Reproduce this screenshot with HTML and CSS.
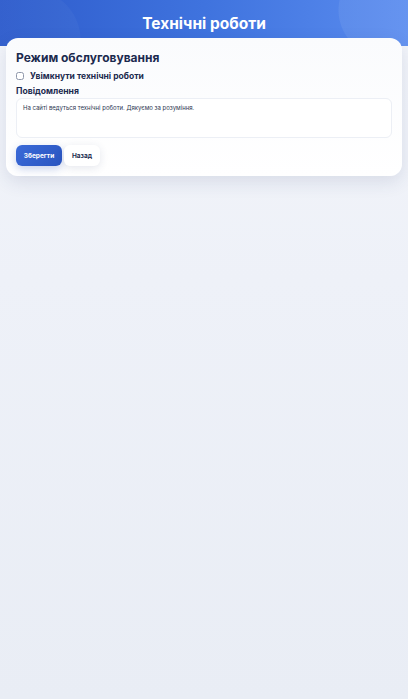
FILE: index.html
```html
<!DOCTYPE html>
<html lang="uk">
<head>
<meta charset="utf-8">
<title>Технічні роботи</title>
<link rel="stylesheet" href="styles.css">
</head>
<body>
<header class="hero">
  <h1 class="hero-title">Технічні роботи</h1>
</header>
<main class="page">
  <section class="card">
    <h2 class="card-title">Режим обслуговування</h2>
    <label class="check-row">
      <input type="checkbox" class="check">
      <span class="check-label">Увімкнути технічні роботи</span>
    </label>
    <div class="field-label">Повідомлення</div>
    <textarea class="message">На сайті ведуться технічні роботи. Дякуємо за розуміння.</textarea>
    <div class="actions">
      <button class="btn btn-primary">Зберегти</button>
      <button class="btn btn-ghost">Назад</button>
    </div>
  </section>
</main>
</body>
</html>
```
FILE: styles.css
```css
html, body {
  margin: 0;
  padding: 0;
}
body {
  min-height: 699px;
  font-family: Inter, "Noto Sans", sans-serif;
  background: linear-gradient(180deg, #f3f5fa 0%, #eef1f8 40%, #e9edf5 100%);
  color: #1b2a4e;
}
.hero {
  height: 46px;
  box-sizing: border-box;
  padding-top: 14px;
  background:
    radial-gradient(circle at 385px 10px, rgba(255,255,255,0.07) 0 46px, transparent 47px),
    radial-gradient(circle at 30px 40px, rgba(255,255,255,0.03) 0 50px, transparent 51px),
    linear-gradient(90deg, #2e5ccc 0%, #3f73de 50%, #5a8cef 100%);
  text-align: center;
}
.hero-title {
  margin: 0;
  font-size: 15.5px;
  line-height: 20px;
  font-weight: 700;
  color: #fff;
}
.page {
  padding: 0 6px;
  margin-top: -8px;
}
.card {
  background: linear-gradient(180deg, #fafbfd 0%, #ffffff 100%);
  border-radius: 12px;
  box-shadow: 0 6px 18px rgba(40, 60, 110, 0.12);
  padding: 12px 10px 10px 10px;
}
.card-title {
  margin: 0;
  font-size: 12px;
  line-height: 16px;
  font-weight: 700;
  color: #1b2a4e;
}
.check-row {
  display: flex;
  align-items: center;
  gap: 6px;
  margin-top: 4px;
}
.check {
  appearance: none;
  -webkit-appearance: none;
  margin: 0;
  width: 8px;
  height: 8px;
  border: 1px solid #8e97aa;
  border-radius: 2.5px;
  background: #fff;
}
.check-label {
  font-size: 8.5px;
  line-height: 12px;
  font-weight: 700;
  color: #1b2a4e;
}
.field-label {
  margin-top: 3px;
  font-size: 8.6px;
  line-height: 12px;
  font-weight: 700;
  color: #1b2a4e;
}
.message {
  display: block;
  box-sizing: border-box;
  width: 100%;
  height: 40px;
  margin-top: 1px;
  padding: 5px 6px;
  border: 1px solid #eceff5;
  border-radius: 6px;
  background: #fff;
  font-family: Inter, "Noto Sans", sans-serif;
  font-size: 6px;
  line-height: 8px;
  color: #2a3550;
  resize: none;
  outline: none;
}
.actions {
  display: flex;
  gap: 2px;
  margin-top: 7px;
}
.btn {
  height: 21px;
  border: 0;
  border-radius: 6px;
  font-family: Inter, "Noto Sans", sans-serif;
  font-size: 6.5px;
  font-weight: 700;
  padding: 0;
}
.btn-primary {
  width: 46px;
  background: linear-gradient(135deg, #3a6ad8 0%, #2a55c0 100%);
  color: #fff;
  box-shadow: 0 3px 8px rgba(40, 80, 180, 0.25);
}
.btn-ghost {
  width: 36px;
  background: #fff;
  color: #1b2a4e;
  box-shadow: 0 2px 8px rgba(40, 60, 110, 0.12);
}
```
